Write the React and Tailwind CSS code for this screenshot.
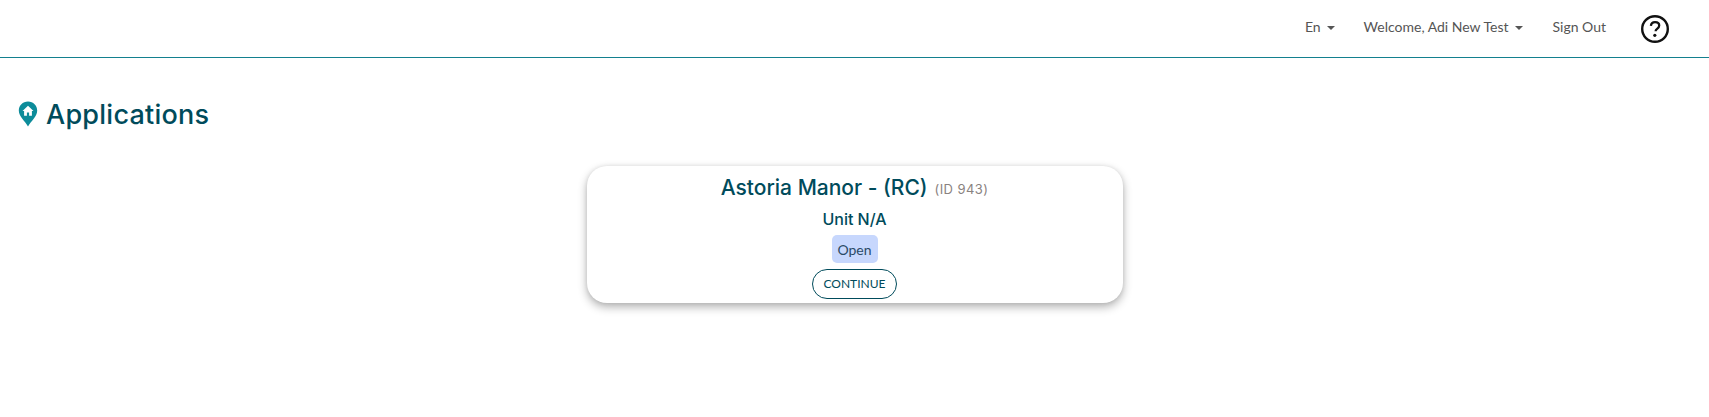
const Caret = () => <span className="ml-[6px] inline-block border-x-[4px] border-t-[4px] border-x-transparent border-t-[#555] align-middle" />;

export default function App() {
  return (
    <div className="min-h-[417px] bg-white font-['Lato','Noto_Sans',sans-serif]">
      <header className="flex h-[58px] items-center justify-end border-b border-[#13808f] pr-[39px]">
        <nav className="flex items-center text-[14px] text-[#555]">
          <span className="mb-[4px] mr-[29px]">En<Caret /></span>
          <span className="mb-[4px] mr-[30px]">Welcome, Adi New Test<Caret /></span>
          <span className="mb-[4px] mr-[34px]">Sign Out</span>
          <svg width="30" height="30" viewBox="0 0 30 30" className="mt-[1px]" aria-label="Help">
            <circle cx="15" cy="15" r="12.8" fill="none" stroke="#111" strokeWidth="2.4" />
            <path d="M10.9 11.9c.2-2.5 1.9-3.8 4.2-3.8 2.4 0 4.1 1.4 4.1 3.5 0 1.700-1 2.500-2.100 3.300-1 .7-1.500 1.200-1.500 2.400" fill="none" stroke="#111" strokeWidth="2.300" />
            <circle cx="14.800" cy="21.300" r="1.600" fill="#111" />
          </svg>
        </nav>
      </header>

      <main className="px-[18px]">
        <div className="mt-[37px] flex h-[40px] items-center">
          <svg width="20" height="26" viewBox="0 0 20 26" className="mb-[3px] shrink-0" aria-hidden="true">
            <path d="M10 .5C4.700.5.800 4.500.800 9.500c0 3.200 1.500 5.600 3.500 8.200 2 2.500 4.200 5 5.700 7.800 1.500-2.800 3.700-5.300 5.700-7.800 2-2.600 3.500-5 3.500-8.200C19.200 4.500 15.300.5 10 .5z" fill="#0d8c9a" />
            <path d="M10 4.800 4.500 10h1.600v4.700h2.800v-3.100h2.200v3.100h2.800V10h1.600z" fill="#fff" />
          </svg>
          <h1 className="ml-[8px] font-['Inter',sans-serif] text-[27px] font-medium tracking-[0.25px] text-[#004b5b]">Applications</h1>
        </div>

        <section className="mx-auto mt-[31px] flex h-[137px] w-[536px] flex-col items-center rounded-[20px] bg-white pt-[6px] shadow-[0_4px_10px_rgba(0,0,0,0.3),0_0_4px_rgba(0,0,0,0.08)]">
          <div className="flex h-[32px] items-center font-['Inter',sans-serif]">
            <h2 className="text-[21px] font-medium text-[#004b5b]">Astoria Manor - (RC)</h2>
            <span className="ml-[7px] mt-[3px] text-[13px] tracking-[0.4px] text-[#8a8280]">(ID 943)</span>
          </div>
          <h3 className="mt-[2px] h-[26px] font-['Inter',sans-serif] text-[16px] leading-[26px] font-medium text-[#004b5b]">Unit N/A</h3>
          <span className="mt-[3px] flex h-[28px] w-[46px] items-center justify-center rounded-[5px] bg-[#c7d7fd] text-[14px] text-[#2a4a66]">Open</span>
          <button className="mt-[6px] h-[30px] w-[85px] rounded-full border border-[#004b5b] bg-white text-[12px] text-[#004b5b]">CONTINUE</button>
        </section>
      </main>
    </div>
  );
}
